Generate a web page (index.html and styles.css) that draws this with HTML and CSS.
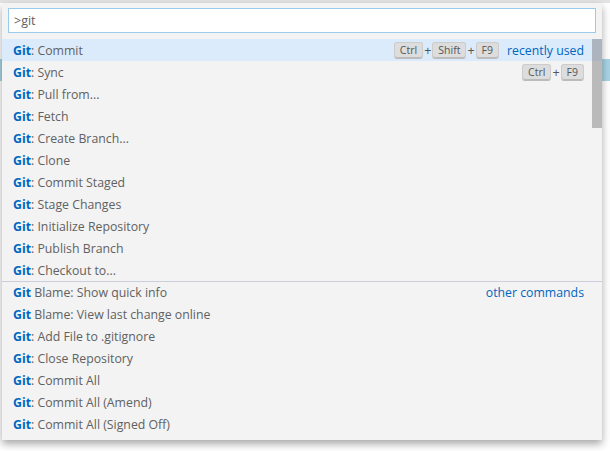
FILE: index.html
```html
<!DOCTYPE html>
<html>
<head>
<meta charset="utf-8">
<link rel="stylesheet" href="styles.css">
</head>
<body>
<div class="editor">
  <div class="tabbar"></div>
  <div class="editor-body">
    <div class="line"></div>
    <div class="line current"></div>
  </div>
</div>
<div class="quick-open">
  <div class="input-wrap">
    <div class="input">&gt;git</div>
  </div>
  <div class="list">
    <div class="row focused"><span class="label"><b>Git</b>: Commit</span><span class="keys"><kbd>Ctrl</kbd><i>+</i><kbd>Shift</kbd><i>+</i><kbd>F9</kbd></span><span class="group">recently used</span></div>
    <div class="row"><span class="label"><b>Git</b>: Sync</span><span class="keys"><kbd>Ctrl</kbd><i>+</i><kbd>F9</kbd></span></div>
    <div class="row"><span class="label"><b>Git</b>: Pull from...</span></div>
    <div class="row"><span class="label"><b>Git</b>: Fetch</span></div>
    <div class="row"><span class="label"><b>Git</b>: Create Branch...</span></div>
    <div class="row"><span class="label"><b>Git</b>: Clone</span></div>
    <div class="row"><span class="label"><b>Git</b>: Commit Staged</span></div>
    <div class="row"><span class="label"><b>Git</b>: Stage Changes</span></div>
    <div class="row"><span class="label"><b>Git</b>: Initialize Repository</span></div>
    <div class="row"><span class="label"><b>Git</b>: Publish Branch</span></div>
    <div class="row"><span class="label"><b>Git</b>: Checkout to...</span></div>
    <div class="row separator"><span class="label"><b>Git</b> Blame: Show quick info</span><span class="group">other commands</span></div>
    <div class="row"><span class="label"><b>Git</b> Blame: View last change online</span></div>
    <div class="row"><span class="label"><b>Git</b>: Add File to .gitignore</span></div>
    <div class="row"><span class="label"><b>Git</b>: Close Repository</span></div>
    <div class="row"><span class="label"><b>Git</b>: Commit All</span></div>
    <div class="row"><span class="label"><b>Git</b>: Commit All (Amend)</span></div>
    <div class="row"><span class="label"><b>Git</b>: Commit All (Signed Off)</span></div>
  </div>
  <div class="scrollbar"></div>
</div>
</body>
</html>
```
FILE: styles.css
```css
html, body {
  margin: 0;
  padding: 0;
}
body {
  width: 610px;
  height: 451px;
  background: #ffffff;
  overflow: hidden;
  font-family: "Open Sans", "Noto Sans", sans-serif;
  position: relative;
}
.editor {
  display: flex;
  flex-direction: column;
  height: 451px;
}
.tabbar {
  height: 3px;
  background: #e3e3e3;
}
.editor-body {
  flex: 1;
  display: flex;
  flex-direction: column;
}
.line {
  height: 56px;
}
.line.current {
  height: 22px;
  background: #a9d4e6;
}
.quick-open {
  position: absolute;
  left: 2px;
  top: 3px;
  width: 600px;
  background: #f3f3f3;
  box-shadow: 0 4px 8px rgba(0, 0, 0, 0.35);
  padding-bottom: 5px;
}
.input-wrap {
  padding: 5px 6px 6px 6px;
}
.input {
  height: 23px;
  border: 1px solid #99cbeb;
  background: #ffffff;
  color: #616161;
  font-size: 12.5px;
  line-height: 23px;
  padding-left: 5px;
}
.list {
  display: flex;
  flex-direction: column;
}
.row {
  box-sizing: border-box;
  height: 22px;
  display: flex;
  align-items: center;
  padding: 0 18px 0 11px;
  font-size: 12.3px;
  color: #616161;
  white-space: nowrap;
}
.row.focused {
  background: #dcebfc;
}
.row.separator {
  border-top: 1px solid #cccedb;
}
.label {
  flex: 1;
}
.label b {
  color: #0066bf;
  font-weight: 700;
}
.keys {
  display: flex;
  align-items: center;
  color: #555555;
}
.keys i {
  font-style: normal;
  padding: 0 1px;
  font-size: 12.5px;
}
kbd {
  font-family: inherit;
  font-size: 10.5px;
  line-height: 15px;
  padding: 0 5px;
  background: #dddddd;
  border: 1px solid #cccccc;
  border-bottom-color: #bbbbbb;
  border-radius: 3px;
  box-shadow: inset 0 -1px 0 #bbbbbb;
  color: #555555;
}
.group {
  color: #0066bf;
  margin-left: 8px;
}
.scrollbar {
  position: absolute;
  right: 0;
  top: 36px;
  width: 10px;
  height: 89px;
  background: rgba(100, 100, 100, 0.4);
}
```
